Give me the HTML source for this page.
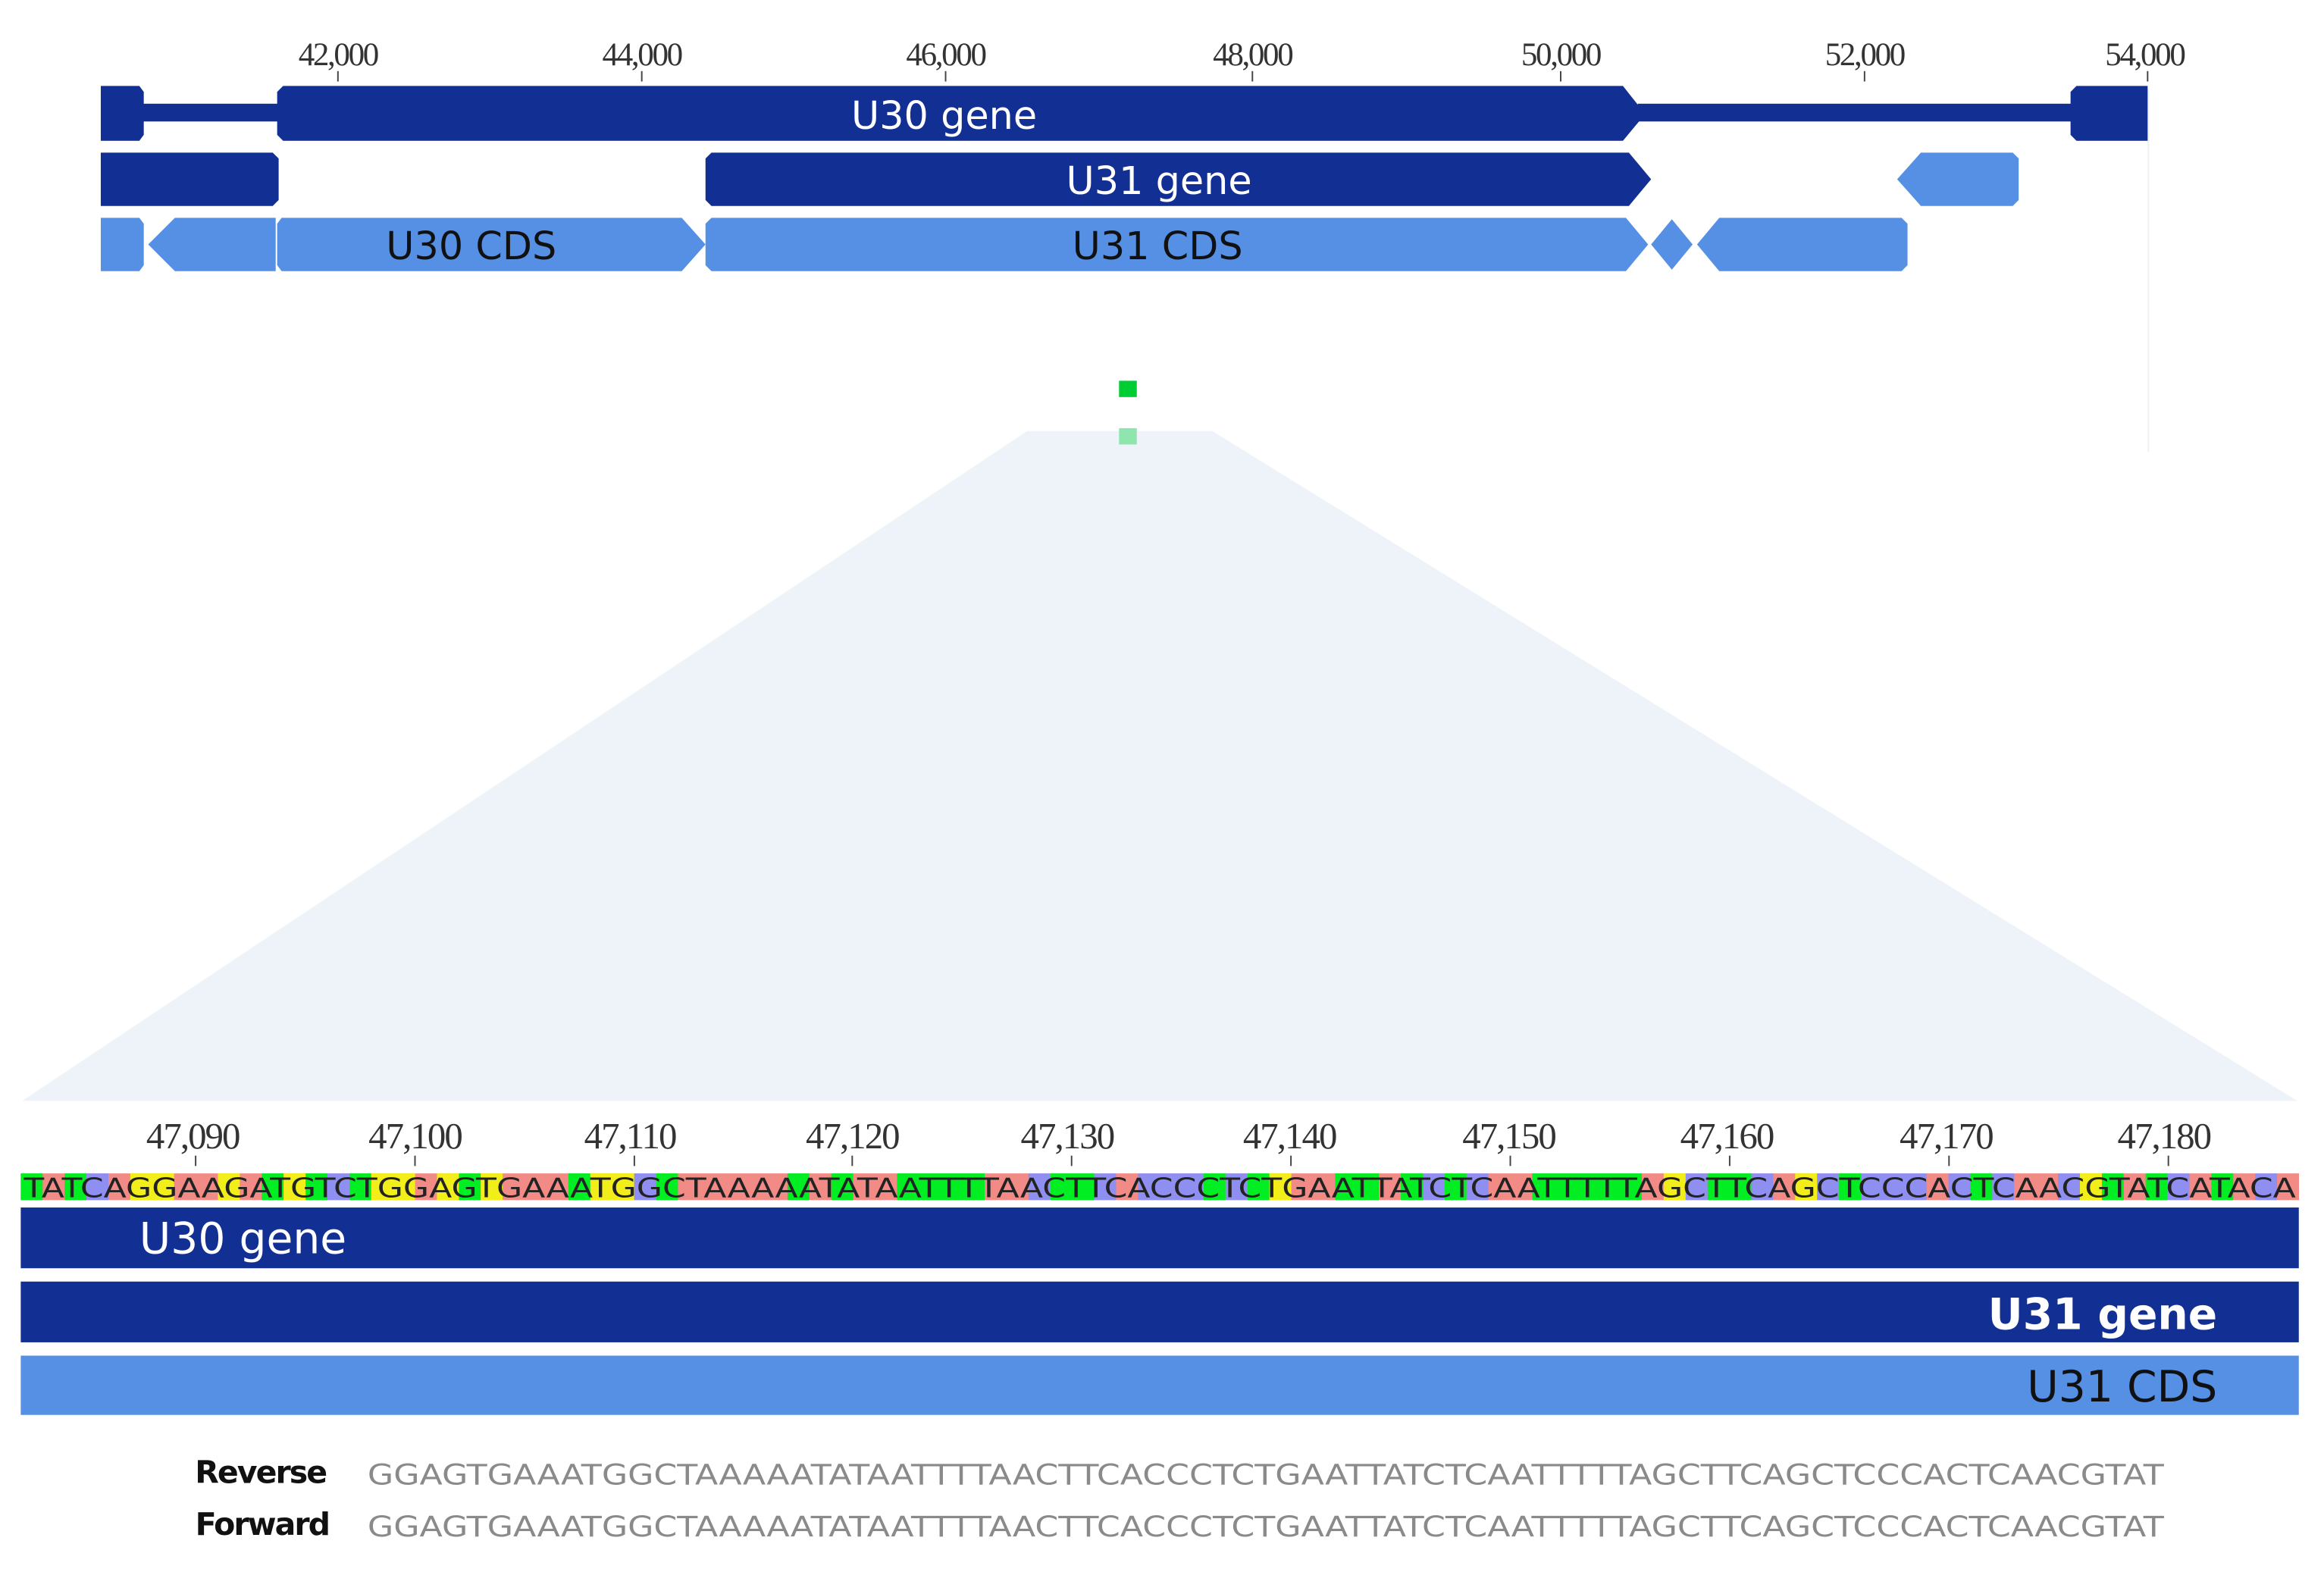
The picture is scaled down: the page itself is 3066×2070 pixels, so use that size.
<!DOCTYPE html>
<html><head><meta charset="utf-8"><style>
html,body{margin:0;padding:0;background:#fff;}
svg{display:block;}
</style></head><body>
<svg width="3066" height="2070" viewBox="0 0 1568 1059" preserveAspectRatio="none" xmlns="http://www.w3.org/2000/svg" font-family="Liberation Sans, sans-serif">
<rect width="1568" height="1059" fill="#fff"/>
<!-- top ruler -->
<g font-family="Liberation Serif, serif" font-size="22" fill="#333" text-anchor="middle" letter-spacing="-1.2">
<text x="228" y="44">42,000</text><text x="433" y="44">44,000</text><text x="638" y="44">46,000</text><text x="845" y="44">48,000</text><text x="1053" y="44">50,000</text><text x="1258" y="44">52,000</text><text x="1447" y="44">54,000</text>
</g>
<g stroke="#444" stroke-width="1"><line x1="228" y1="48" x2="228" y2="55"/><line x1="433" y1="48" x2="433" y2="55"/><line x1="638" y1="48" x2="638" y2="55"/><line x1="845" y1="48" x2="845" y2="55"/><line x1="1053" y1="48" x2="1053" y2="55"/><line x1="1258" y1="48" x2="1258" y2="55"/><line x1="1449" y1="48" x2="1449" y2="55"/></g>
<line x1="1449.5" y1="60" x2="1449.5" y2="305" stroke="#f0f0f0"/>
<!-- row1 -->
<g fill="#122f93">
<path d="M68 58H94L97 62V91L94 95H68Z"/>
<rect x="96" y="70" width="94" height="12"/>
<path d="M191 58H1095L1110 77L1095 95H191L187 91V62Z"/>
<rect x="1105" y="70" width="295" height="12"/>
<path d="M1401 58H1449V95H1401L1397 91V62Z"/>
<path d="M68 103H184L188 107V135L184 139H68Z"/>
<path d="M480 103H1099L1114 121L1099 139H480L476 135V107Z"/>
</g>
<g fill="#5590e5">
<path d="M1296 103H1358L1362 107V135L1358 139H1296L1280 121Z"/>
<path d="M68 147H94L97 151V179L94 183H68Z"/>
<path d="M118 147H186V183H118L100 165Z"/>
<path d="M190 147H460L476 165L460 183H190L187 179V151Z"/>
<path d="M480 147H1097L1112 165L1097 183H480L476 179V151Z"/>
<path d="M1128 148L1142 165L1128 182L1114 165Z"/>
<path d="M1160 147H1283L1287 151V179L1283 183H1160L1145 165Z"/>
</g>
<g font-size="26" text-anchor="middle" font-family="DejaVu Sans, sans-serif">
<text x="637" y="87" fill="#fff">U30 gene</text>
<text x="782" y="131" fill="#fff">U31 gene</text>
<text x="318" y="175" fill="#111">U30 CDS</text>
<text x="781" y="175" fill="#111">U31 CDS</text>
</g>
<path d="M693 291H818L1550 743H15Z" fill="#eef3fa"/>
<rect x="755" y="257" width="12" height="11" fill="#00cc33"/>
<rect x="755" y="289" width="12" height="11" fill="#8ee6ae"/>
<!-- bottom ruler -->
<g font-family="Liberation Serif, serif" font-size="25" fill="#333" text-anchor="middle" letter-spacing="-1">
<text x="130" y="775">47,090</text><text x="280" y="775">47,100</text><text x="425" y="775">47,110</text><text x="575" y="775">47,120</text><text x="720" y="775">47,130</text><text x="870" y="775">47,140</text><text x="1018" y="775">47,150</text><text x="1165" y="775">47,160</text><text x="1313" y="775">47,170</text><text x="1460" y="775">47,180</text>
</g>
<g stroke="#444"><line x1="132" y1="780" x2="132" y2="787"/><line x1="280" y1="780" x2="280" y2="787"/><line x1="428" y1="780" x2="428" y2="787"/><line x1="575" y1="780" x2="575" y2="787"/><line x1="723" y1="780" x2="723" y2="787"/><line x1="871" y1="780" x2="871" y2="787"/><line x1="1019" y1="780" x2="1019" y2="787"/><line x1="1167" y1="780" x2="1167" y2="787"/><line x1="1315" y1="780" x2="1315" y2="787"/><line x1="1463" y1="780" x2="1463" y2="787"/></g>
<g transform="translate(14,792) scale(14.78,1)">
<rect x="0" y="0" width="104" height="18" fill="#f28a86"/>
<g fill="#00ee22">
<rect x="0" width="1" height="18"/><rect x="2" width="1" height="18"/><rect x="11" width="1" height="18"/><rect x="13" width="1" height="18"/><rect x="15" width="1" height="18"/><rect x="20" width="1" height="18"/><rect x="25" width="1" height="18"/><rect x="29" width="1" height="18"/><rect x="35" width="1" height="18"/><rect x="37" width="1" height="18"/><rect x="40" width="4" height="18"/><rect x="47" width="2" height="18"/><rect x="54" width="1" height="18"/><rect x="56" width="1" height="18"/><rect x="60" width="2" height="18"/><rect x="63" width="1" height="18"/><rect x="65" width="1" height="18"/><rect x="69" width="5" height="18"/><rect x="77" width="2" height="18"/><rect x="83" width="1" height="18"/><rect x="89" width="1" height="18"/><rect x="95" width="1" height="18"/><rect x="97" width="1" height="18"/><rect x="100" width="1" height="18"/>
</g>
<g fill="#8f8ff2">
<rect x="3" width="1" height="18"/><rect x="14" width="1" height="18"/><rect x="28" width="1" height="18"/><rect x="46" width="1" height="18"/><rect x="49" width="1" height="18"/><rect x="51" width="3" height="18"/><rect x="55" width="1" height="18"/><rect x="64" width="1" height="18"/><rect x="66" width="1" height="18"/><rect x="76" width="1" height="18"/><rect x="79" width="1" height="18"/><rect x="82" width="1" height="18"/><rect x="84" width="3" height="18"/><rect x="88" width="1" height="18"/><rect x="90" width="1" height="18"/><rect x="93" width="1" height="18"/><rect x="98" width="1" height="18"/><rect x="102" width="1" height="18"/>
</g>
<g fill="#f2ee1a">
<rect x="5" width="2" height="18"/><rect x="9" width="1" height="18"/><rect x="12" width="1" height="18"/><rect x="16" width="2" height="18"/><rect x="19" width="1" height="18"/><rect x="21" width="1" height="18"/><rect x="26" width="2" height="18"/><rect x="57" width="1" height="18"/><rect x="75" width="1" height="18"/><rect x="81" width="1" height="18"/><rect x="94" width="1" height="18"/>
</g>
</g>
<text x="16" y="808" font-family="DejaVu Sans, sans-serif" font-size="18" fill="#222" textLength="1533" lengthAdjust="spacingAndGlyphs">TATCAGGAAGATGTCTGGAGTGAAATGGCTAAAAATATAATTTTAACTTCACCCTCTGAATTATCTCAATTTTTAGCTTCAGCTCCCACTCAACGTATCATACA</text>
<!-- bars -->
<rect x="14" y="815" width="1537" height="41" fill="#122f93"/>
<rect x="14" y="865" width="1537" height="41" fill="#122f93"/>
<rect x="14" y="915" width="1537" height="40" fill="#5590e5"/>
<g font-family="DejaVu Sans, sans-serif" font-size="29">
<text x="94" y="846" fill="#fff">U30 gene</text>
<text x="1496" y="897" fill="#fff" text-anchor="end" font-weight="bold">U31 gene</text>
<text x="1496" y="946" fill="#111" text-anchor="end">U31 CDS</text>
</g>
<g font-family="DejaVu Sans, sans-serif" font-size="21" font-weight="bold" fill="#111" text-anchor="end" letter-spacing="-1">
<text x="220" y="1001">Reverse</text>
<text x="222" y="1036">Forward</text>
</g>
<g font-family="DejaVu Sans, sans-serif" font-size="19" fill="#8a8a8a">
<text x="248" y="1002" textLength="1212" lengthAdjust="spacingAndGlyphs">GGAGTGAAATGGCTAAAAATATAATTTTAACTTCACCCTCTGAATTATCTCAATTTTTAGCTTCAGCTCCCACTCAACGTAT</text>
<text x="248" y="1037" textLength="1212" lengthAdjust="spacingAndGlyphs">GGAGTGAAATGGCTAAAAATATAATTTTAACTTCACCCTCTGAATTATCTCAATTTTTAGCTTCAGCTCCCACTCAACGTAT</text>
</g>
</svg>
</body></html>
